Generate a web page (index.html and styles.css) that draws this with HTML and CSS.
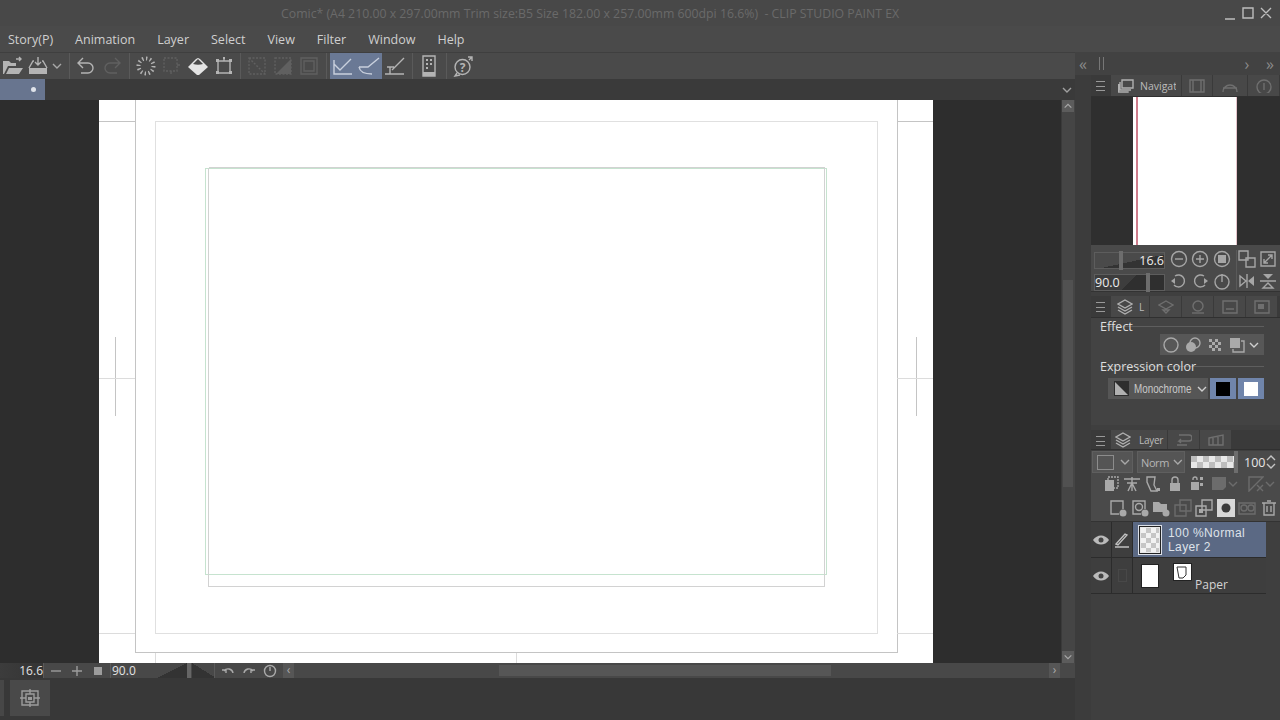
FILE: index.html
```html
<!DOCTYPE html>
<html lang="en">
<head>
    <meta charset="UTF-8">
    <title>Comic - CLIP STUDIO PAINT EX</title>
    <link rel="stylesheet" href="styles.css">
</head>
<body>
    <svg class="defs" width="0" height="0">
        <symbol id="chev" viewBox="0 0 12 12"><path d="M2 4l4 4 4-4" fill="none" stroke="currentColor" stroke-width="1.4"/></symbol>
    </svg>

    <div class="titlebar">
        <span class="title">Comic* (A4 210.00 x 297.00mm Trim size:B5 Size 182.00 x 257.00mm 600dpi 16.6%)&nbsp; - CLIP STUDIO PAINT EX</span>
        <div class="win-buttons">
            <svg class="ic" width="58" height="16" viewBox="0 0 58 16"><path d="M6 14h10M24 3h10v10H24zM42 3l10 10M52 3L42 13"/></svg>
        </div>
    </div>

    <div class="menubar">
        <span>Story(P)</span><span>Animation</span><span>Layer</span><span>Select</span><span>View</span><span>Filter</span><span>Window</span><span>Help</span>
    </div>

    <div class="workspace">
        <div class="main">
            <div class="toolbar">
                <div class="tb-group first">
                    <div class="tb-btn"><svg class="ic" width="22" height="20" viewBox="0 0 22 20"><path class="solid" d="M1 18V5h6l2 2h5v3H6L2 18zM4 18l3-6h14l-4 6z"/><path d="M14 3h5M17 1l2 2-2 2"/></svg></div>
                    <div class="tb-btn"><svg class="ic" width="22" height="20" viewBox="0 0 22 20"><path d="M11 1v8M8 6l3 3 3-3M7 5H6l-4 7M15 5h1l4 7"/><path class="solid" d="M2 12h18v6H2z"/></svg></div>
                    <div class="tb-chev"><svg width="12" height="12"><use href="#chev"/></svg></div>
                </div>
                <div class="tb-group">
                    <div class="tb-btn"><svg class="ic" width="20" height="20" viewBox="0 0 20 20"><path d="M7 2L2 7l5 5M2 7h10a5 5 0 0 1 0 10H5"/></svg></div>
                    <div class="tb-btn dim"><svg class="ic" width="20" height="20" viewBox="0 0 20 20"><path d="M13 2l5 5-5 5M18 7H8a5 5 0 0 0 0 10h7"/></svg></div>
                </div>
                <div class="tb-group tight">
                    <div class="tb-btn"><svg class="ic" width="20" height="20" viewBox="0 0 20 20"><circle class="rays" cx="10" cy="10" r="7.5"/></svg></div>
                    <div class="tb-btn dim"><svg class="ic" width="20" height="20" viewBox="0 0 20 20"><path stroke-dasharray="2 1.5" d="M2 2h13v13H2z"/><path d="M9 15v3M15 9h3"/></svg></div>
                    <div class="tb-btn bright"><svg class="ic" width="22" height="20" viewBox="0 0 22 20"><path class="solid" d="M1 11l8-8 2-1 2 1 8 8-9 8h-2z"/><path class="cut" d="M6 8l5-5 5 5c-3 1-7 1-10 0z"/></svg></div>
                    <div class="tb-btn"><svg class="ic" width="20" height="20" viewBox="0 0 20 20"><path d="M4 5h12v12H4zM10 1v4"/><path class="solid" d="M2 3h3v3H2zM15 3h3v3h-3zM2 15h3v3H2zM15 15h3v3h-3zM9 1h2v2H9z"/></svg></div>
                </div>
                <div class="tb-group">
                    <div class="tb-btn dim"><svg class="ic" width="20" height="20" viewBox="0 0 20 20"><path stroke-dasharray="2 1.5" d="M2 2h16v16H2zM2 2l16 16"/></svg></div>
                    <div class="tb-btn dim"><svg class="ic" width="20" height="20" viewBox="0 0 20 20"><path stroke-dasharray="2 1.5" d="M2 2h16v16H2z"/><path class="solid" d="M18 3v15H3z"/></svg></div>
                    <div class="tb-btn dim"><svg class="ic" width="20" height="20" viewBox="0 0 20 20"><path d="M2 2h16v16H2zM5 5h10v10H5z"/></svg></div>
                </div>
                <div class="tb-group">
                    <div class="tb-btn active"><svg class="ic" width="22" height="20" viewBox="0 0 22 20"><path d="M2 4v14h18M2 8l6 6 11-11"/></svg></div>
                    <div class="tb-btn active"><svg class="ic" width="24" height="20" viewBox="0 0 24 20"><path d="M2 11c1 6 7 7 13 7M2 11h9L22 2"/></svg></div>
                    <div class="tb-btn"><svg class="ic" width="22" height="20" viewBox="0 0 22 20"><path d="M1 18h19M3 11h7M6 11v7M8 14L20 2"/></svg></div>
                </div>
                <div class="tb-group">
                    <div class="tb-btn"><svg class="ic" width="16" height="22" viewBox="0 0 16 22"><path d="M2 1h12v20H2z"/><path class="solid" d="M2 17h12v4H2zM5 4h2v2H5zM9 4h2v2H9zM5 8h2v2H5zM9 8h2v2H9zM5 12h2v2H5z"/></svg></div>
                </div>
                <div class="tb-group end">
                    <div class="tb-btn"><svg class="ic" width="20" height="22" viewBox="0 0 20 22"><circle cx="9.500" cy="12" r="7.500"/><path d="M4 18l-2 3 5-1M15 2h4v4M19 2l-3 3"/><text class="q" x="9.500" y="16.500" text-anchor="middle">?</text></svg></div>
                </div>
            </div>

            <div class="tabbar">
                <div class="doc-tab"><i></i></div>
                <svg width="12" height="12"><use href="#chev"/></svg>
            </div>

            <div class="canvas-row">
                <div class="canvas">
                    <svg class="page" width="834" height="563" viewBox="99 100 834 563" shape-rendering="crispEdges">
                        <path class="bleed" d="M135.5 100v552.5h762V100M99 121.5h36M897 121.5h36M115.5 337v79M916.5 337v79"/>
                        <path class="faint" d="M99 378.5h36M897 378.5h36M99 633.5h36M897 633.5h36M155.5 653v10M516.5 653v10"/>
                        <path class="trim" d="M155.5 121.5h722v512h-722z"/>
                        <path class="safe" d="M205.5 168.5h621v406h-621z"/>
                        <path class="inner" d="M208.5 575v11h616v-11M208.5 167.5h616M208.5 168v407M824.5 168v407"/>
                    </svg>
                </div>
                <div class="vscroll">
                    <div class="sb-btn"><svg width="10" height="10"><use href="#chev" transform="rotate(180 5 5)"/></svg></div>
                    <div class="v-track"><div class="v-thumb"></div></div>
                    <div class="sb-btn"><svg width="10" height="10"><use href="#chev"/></svg></div>
                </div>
            </div>

            <div class="statusbar">
                <div class="st-field zoom-field">16.6</div>
                <div class="st-icons">
                    <svg class="ic" width="14" height="14" viewBox="0 0 14 14"><path d="M2 7h10"/></svg>
                    <svg class="ic" width="14" height="14" viewBox="0 0 14 14"><path d="M2 7h10M7 2v10"/></svg>
                    <svg class="ic" width="14" height="14" viewBox="0 0 14 14"><path class="solid" d="M3 3h8v8H3z"/></svg>
                </div>
                <div class="st-field angle-field">90.0<i></i></div>
                <div class="st-rot">
                    <svg class="ic" width="14" height="14" viewBox="0 0 14 14"><path d="M3 7a5 5 0 0 1 9 2M1 6h4v3"/></svg>
                    <svg class="ic" width="14" height="14" viewBox="0 0 14 14"><path d="M11 7a5 5 0 0 0-9 2M13 6H9v3"/></svg>
                    <svg class="ic" width="14" height="14" viewBox="0 0 14 14"><circle cx="7" cy="7" r="5.5"/><path d="M7 3v4"/></svg>
                </div>
                <div class="st-back">‹</div>
                <div class="h-track"><div class="h-thumb"></div></div>
                <div class="st-next">›</div>
            </div>

            <div class="bottombar">
                <div class="grip"></div>
                <div class="bottom-btn">
                    <svg class="ic" width="20" height="20" viewBox="0 0 20 20"><path d="M2 3h16v14H2zM6 6h8v8H6zM10 1v5M10 14v5M0 10h6M14 10h6"/><path class="solid" d="M8 9h4v3H8z"/></svg>
                </div>
            </div>
        </div>

        <div class="side">
            <div class="side-strip">
                <span class="arrows">«</span><span class="bars"></span><span class="spacer"></span><span class="arrows one">›</span><span class="arrows">»</span>
            </div>
            <div class="panels">

                <section class="nav-panel">
                    <div class="tabrow">
                        <div class="burger"></div>
                        <div class="tab tab-nav on">
                            <svg class="ic" width="16" height="14" viewBox="0 0 16 14"><path d="M4 1h11v8H4zM2 3v8h11M0.700 5v8h10"/></svg>
                            <span class="clip">Navigat</span>
                        </div>
                        <div class="tab w31 faded"><svg class="ic" width="16" height="14" viewBox="0 0 16 14"><path d="M1 1h14v12H1zM4 1v12M12 1v12"/></svg></div>
                        <div class="tab w35 faded"><svg class="ic" width="16" height="14" viewBox="0 0 16 14"><path d="M1 13a7 7 0 0 1 14 0M1 9h14"/></svg></div>
                        <div class="tab w32 faded"><svg class="ic" width="16" height="14" viewBox="0 0 16 14"><circle cx="8" cy="8" r="7"/><path d="M8 4v7"/></svg></div>
                    </div>
                    <div class="nav-view"><div class="nav-page"></div></div>
                    <div class="nav-controls">
                        <div class="nav-sliders">
                            <div class="slider zoom-slider"><b>16.6</b><i></i></div>
                            <div class="slider angle-slider"><b>90.0</b><i></i></div>
                        </div>
                        <div class="nav-grid">
                            <svg class="ic" width="18" height="18" viewBox="0 0 18 18"><circle cx="9" cy="9" r="7.500"/><path d="M5 9h8"/></svg>
                            <svg class="ic" width="18" height="18" viewBox="0 0 18 18"><circle cx="9" cy="9" r="7.500"/><path d="M5 9h8M9 5v8"/></svg>
                            <svg class="ic" width="18" height="18" viewBox="0 0 18 18"><circle cx="9" cy="9" r="7.500"/><path class="solid" d="M5 5h8v8H5z"/></svg>
                            <svg class="ic" width="18" height="18" viewBox="0 0 18 18"><path d="M5 4a6 6 0 1 1-1 9"/><path class="solid" d="M1 9l4-3v6z"/></svg>
                            <svg class="ic" width="18" height="18" viewBox="0 0 18 18"><path d="M13 4a6 6 0 1 0 1 9"/><path class="solid" d="M17 9l-4-3v6z"/></svg>
                            <svg class="ic" width="18" height="18" viewBox="0 0 18 18"><circle cx="9" cy="10" r="7"/><path d="M9 2v8"/></svg>
                        </div>
                        <div class="nav-grid small">
                            <svg class="ic" width="18" height="18" viewBox="0 0 18 18"><path d="M1 1h9v9H1zM8 8h9v9H8z"/></svg>
                            <svg class="ic" width="18" height="18" viewBox="0 0 18 18"><path d="M2 2h14v14H2zM5 13l8-8M5 9v4h4M13 9V5H9"/></svg>
                            <svg class="ic" width="18" height="18" viewBox="0 0 18 18"><path d="M2 4l6 5-6 5zM9 2v14"/><path class="solid" d="M16 4l-6 5 6 5z"/></svg>
                            <svg class="ic" width="18" height="18" viewBox="0 0 18 18"><path d="M1 9h16M4 16l5-5 5 5z"/><path class="solid" d="M4 2l5 5 5-5z"/></svg>
                        </div>
                    </div>
                </section>

                <section class="prop-panel">
                    <div class="tabrow">
                        <div class="burger"></div>
                        <div class="tab w39 on">
                            <svg class="ic" width="16" height="16" viewBox="0 0 16 16"><path d="M8 1l7 4-7 4-7-4zM1 8l7 4 7-4M1 11l7 4 7-4"/></svg>
                            <span class="tiny">L</span>
                        </div>
                        <div class="tab w32 faded"><svg class="ic" width="16" height="14" viewBox="0 0 16 14"><path d="M8 1l7 4-7 4-7-4zM8 13l-3-3h6z"/></svg></div>
                        <div class="tab w32 faded"><svg class="ic" width="16" height="14" viewBox="0 0 16 14"><circle cx="8" cy="6" r="5"/><path d="M2 13h12"/></svg></div>
                        <div class="tab w32 faded"><svg class="ic" width="16" height="14" viewBox="0 0 16 14"><path d="M1 1h14v12H1zM4 9h8"/></svg></div>
                        <div class="tab w32 faded"><svg class="ic" width="16" height="14" viewBox="0 0 16 14"><path d="M1 1h14v12H1z"/><path class="solid" d="M4 4h6v5H4z"/></svg></div>
                    </div>
                    <div class="prop-body">
                        <div class="prop-label"><span>Effect</span></div>
                        <div class="effect-bar">
                            <svg class="ic" width="16" height="16" viewBox="0 0 16 16"><circle cx="8" cy="8" r="7"/></svg>
                            <svg class="ic" width="16" height="16" viewBox="0 0 16 16"><circle cx="10" cy="6" r="5"/><circle class="solid" cx="6" cy="10" r="5"/></svg>
                            <svg class="ic" width="16" height="16" viewBox="0 0 16 16"><path class="check" d="M2 2h3v3H2zM8 2h3v3H8zM5 5h3v3H5zM11 5h3v3h-3zM2 8h3v3H2zM8 8h3v3H8zM5 11h3v3H5zM11 11h3v3h-3z"/></svg>
                            <svg class="ic" width="16" height="16" viewBox="0 0 16 16"><path class="solid" d="M1 1h10v10H1z"/><path d="M12 4h3v11H4v-3"/></svg>
                            <svg class="pale back" width="12" height="12"><use href="#chev"/></svg>
                        </div>
                        <div class="prop-label second"><span>Expression color</span></div>
                        <div class="express-row">
                            <div class="mono-select">
                                <svg width="15" height="15" viewBox="0 0 15 15"><path d="M0 0h15v15H0z" fill="#2e2e2e"/><path d="M1 1l13 13H1z" fill="#b0b0b0"/></svg>
                                <span>Monochrome</span>
                                <svg class="pale" width="12" height="12"><use href="#chev"/></svg>
                            </div>
                            <div class="swatch"><i class="black"></i></div>
                            <div class="swatch"><i class="white"></i></div>
                        </div>
                    </div>
                </section>

                <section class="layer-panel">
                    <div class="tabrow low">
                        <div class="burger"></div>
                        <div class="tab w57 on">
                            <svg class="ic" width="16" height="16" viewBox="0 0 16 16"><path d="M8 1l7 4-7 4-7-4zM1 8l7 4 7-4M1 11l7 4 7-4"/></svg>
                            <span class="tiny">Layer</span>
                        </div>
                        <div class="tab w32 faded"><svg class="ic" width="16" height="12" viewBox="0 0 16 12"><path d="M3 1h10a3 3 0 0 1 0 6H3l2-2M3 7l2 2M1 11h10"/></svg></div>
                        <div class="tab w32 faded"><svg class="ic" width="16" height="12" viewBox="0 0 16 12"><path d="M1 4l14-3v10H1zM5 4v7M10 3v8"/></svg></div>
                    </div>
                    <div class="layer-tools">
                        <div class="mode-row">
                            <div class="sel sel-box"><i></i><svg width="12" height="12"><use href="#chev"/></svg></div>
                            <div class="sel sel-mode"><span>Norm</span><svg width="12" height="12"><use href="#chev"/></svg></div>
                            <div class="opacity"><i></i></div>
                            <span class="opacity-val">100</span>
                            <svg class="ic stepper" width="10" height="16" viewBox="0 0 10 16"><path d="M1 6l4-4 4 4M1 10l4 4 4-4"/></svg>
                        </div>
                        <div class="icon-row row-a">
                            <span><svg class="ic" width="16" height="16" viewBox="0 0 16 16"><path d="M5 1h10v11H5z" stroke-dasharray="2 1"/><path class="solid" d="M2 4h9v11H2z"/></svg></span>
                            <span><svg class="ic" width="18" height="16" viewBox="0 0 18 16"><path d="M1 3h16M4 7h10M9 1v14M5 15l4-8 4 8"/></svg></span>
                            <span><svg class="ic" width="16" height="16" viewBox="0 0 16 16"><path d="M2 1h8l-1 8 3 6H6L2 6z"/><path class="solid" d="M12 12h3v3h-3z"/></svg></span>
                            <span><svg class="ic" width="14" height="16" viewBox="0 0 14 16"><path d="M4 7V4a3 3 0 0 1 6 0v3"/><path class="solid" d="M2 7h10v8H2z"/></svg></span>
                            <span><svg class="ic" width="16" height="16" viewBox="0 0 16 16"><path d="M5 4V3a2 2 0 0 1 4 0v1"/><path class="solid" d="M3 6h8v8H3zM12 1h3v3h-3zM12 7h3v3h-3z"/></svg></span>
                            <span class="wide dim"><svg class="ic" width="16" height="16" viewBox="0 0 16 16"><path class="solid" d="M1 1h14v10l-3 3H1z"/></svg><svg width="12" height="12"><use href="#chev"/></svg></span>
                            <span class="wide dim"><svg class="ic" width="16" height="16" viewBox="0 0 16 16"><path d="M1 1h14L1 15zM9 9l6 6M15 9l-6 6"/></svg><svg width="12" height="12"><use href="#chev"/></svg></span>
                        </div>
                        <div class="icon-row row-b">
                            <span><svg class="ic" width="18" height="18" viewBox="0 0 18 18"><path d="M10 15H2V2h12v8"/><circle class="solid" cx="14" cy="14" r="3.500"/></svg></span>
                            <span><svg class="ic" width="18" height="18" viewBox="0 0 18 18"><path d="M10 15H2V2h12v8"/><circle cx="8" cy="8" r="3.500"/><circle class="solid" cx="14" cy="14" r="3.500"/></svg></span>
                            <span><svg class="ic" width="18" height="18" viewBox="0 0 18 18"><path class="solid" d="M1 3h6l2 2h6v8H1z"/><circle class="solid" cx="14" cy="14" r="3.500"/></svg></span>
                            <span class="dim"><svg class="ic" width="18" height="18" viewBox="0 0 18 18"><path d="M6 1h11v11H6zM1 6h11v11H1z"/></svg></span>
                            <span><svg class="ic" width="18" height="18" viewBox="0 0 18 18"><path d="M7 1h10v10H7zM1 7h10v10H1z"/><path class="solid" d="M4 10h4v4H4z"/></svg></span>
                            <span class="bright"><svg width="18" height="18" viewBox="0 0 18 18"><path d="M0 0h18v18H0z" fill="#d8d8d8"/><circle cx="9" cy="9" r="4.500" fill="#3c3c3c"/></svg></span>
                            <span class="dim"><svg class="ic" width="18" height="18" viewBox="0 0 18 18"><path d="M1 4h16v11H1z"/><circle cx="6" cy="9" r="3"/><circle cx="13" cy="9" r="3"/></svg></span>
                            <span><svg class="ic" width="14" height="16" viewBox="0 0 14 16"><path d="M2 3h10v12H2zM0 3h14M5 1h4M5 6v6M9 6v6"/></svg></span>
                        </div>
                    </div>

                    <div class="layer-row current">
                        <div class="eye-col"><svg width="16" height="10" viewBox="0 0 16 10"><path d="M0 5c4-6 12-6 16 0-4 6-12 6-16 0z" fill="#bbb"/><circle cx="8" cy="5" r="2.500" fill="#444"/></svg></div>
                        <div class="pen-col"><svg class="ic" width="16" height="16" viewBox="0 0 16 16"><path d="M1 15h14M2 12l2 1 9-10-2-1z"/></svg></div>
                        <div class="layer-body">
                            <div class="thumb checker"></div>
                            <div class="layer-text"><div>100 %Normal</div><div>Layer 2</div></div>
                        </div>
                    </div>
                    <div class="layer-row">
                        <div class="eye-col"><svg width="16" height="10" viewBox="0 0 16 10"><path d="M0 5c4-6 12-6 16 0-4 6-12 6-16 0z" fill="#bbb"/><circle cx="8" cy="5" r="2.500" fill="#444"/></svg></div>
                        <div class="pen-col"><i class="no-pen"></i></div>
                        <div class="layer-body paper">
                            <div class="thumb plain"></div>
                            <div class="mask"><svg width="13" height="13" viewBox="0 0 13 13"><path d="M1 1h9v8l-3 3H3z" fill="none" stroke="#333"/></svg></div>
                            <span class="paper-name">Paper</span>
                        </div>
                    </div>
                </section>
            </div>
        </div>
    </div>
</body>
</html>
```

FILE: styles.css
```css
* {
    box-sizing: border-box;
}
html, body {
    height: 100%;
}
body {
    margin: 0;
    width: 1280px;
    height: 720px;
    overflow: hidden;
    display: flex;
    flex-direction: column;
    background-color: #3b3b3b;
    color: #c4c4c4;
    font-family: "Open Sans", "Liberation Sans", sans-serif;
    font-size: 12px;
}
.defs {
    position: absolute;
}
.ic {
    fill: none;
    stroke: currentColor;
    stroke-width: 1.4;
    flex: none;
}
.ic .solid {
    fill: currentColor;
    stroke: none;
}
.ic .check {
    fill: currentColor;
    stroke: none;
}
.ic .cut {
    fill: #4a4a4a;
    stroke: none;
}
.ic .rays {
    stroke-width: 4;
    stroke-dasharray: 1.4 2.5;
}
.ic .q {
    fill: currentColor;
    stroke: none;
    font-size: 12px;
    font-weight: 700;
}

/* title + menu */
.titlebar {
    height: 26px;
    flex: none;
    display: flex;
    align-items: center;
    justify-content: space-between;
    padding-left: 281px;
    padding-right: 3px;
    background-color: #484848;
}
.title {
    color: #6a6a6a;
    font-size: 12.3px;
    white-space: nowrap;
}
.win-buttons {
    display: flex;
    color: #bdbdbd;
    margin-top: -1px;
}
.menubar {
    height: 26px;
    flex: none;
    display: flex;
    align-items: center;
    gap: 22px;
    padding-left: 8px;
    background-color: #4a4a4a;
    color: #cfcfcf;
    font-size: 12.5px;
}

.workspace {
    flex: 1;
    display: flex;
    min-height: 0;
}
.main {
    width: 1075px;
    display: flex;
    flex-direction: column;
}

/* toolbar */
.toolbar {
    height: 27px;
    flex: none;
    display: flex;
    background-color: #4a4a4a;
    border-top: 1px solid #3f3f3f;
}
.tb-group {
    display: flex;
    align-items: center;
    padding: 0 4px 0 3px;
    border-right: 1px solid #5a5a5a;
}
.tb-group.first {
    padding: 0 5px 0 0;
}
.tb-group.first .tb-btn {
    width: 25px;
}
.tb-group.tight {
    padding-right: 3px;
}
.tb-group.end {
    border-right: none;
}
.tb-btn {
    width: 26px;
    height: 26px;
    display: flex;
    align-items: center;
    justify-content: center;
    color: #b4b4b4;
}
.tb-btn.dim {
    color: #606060;
}
.tb-btn.bright {
    color: #e4e4e4;
}
.tb-btn.active {
    background-color: #6a7995;
    color: #c9d0dd;
}
.tb-chev {
    width: 14px;
    display: flex;
    justify-content: center;
    color: #a8a8a8;
}

.tabbar {
    height: 21px;
    flex: none;
    display: flex;
    justify-content: space-between;
    align-items: center;
    padding-right: 2px;
    background-color: #3a3a3a;
    color: #a0a0a0;
}
.doc-tab {
    width: 45px;
    height: 21px;
    display: flex;
    align-items: center;
    padding-left: 31px;
    background-color: #68758f;
}
.doc-tab i {
    width: 5px;
    height: 5px;
    border-radius: 50%;
    background-color: #dfe3ea;
}

/* canvas */
.canvas-row {
    flex: 1;
    display: flex;
    min-height: 0;
}
.canvas {
    flex: 1;
    padding-left: 99px;
    background-color: #2d2d2d;
    overflow: hidden;
}
.page {
    display: block;
    background-color: #fff;
    fill: none;
}
.page .bleed {
    stroke: #c4c4c4;
}
.page .faint {
    stroke: #dcdcdc;
}
.page .trim {
    stroke: #e0e0e0;
}
.page .inner {
    stroke: #d2d2d2;
}
.page .safe {
    stroke: #c6e3cf;
}
.vscroll {
    width: 14px;
    margin-right: 0;
    display: flex;
    flex-direction: column;
    padding-right: 1px;
    background-color: #454545;
    border-left: 1px solid #3a3a3a;
}
.sb-btn {
    height: 12px;
    flex: none;
    display: flex;
    align-items: center;
    justify-content: center;
    background-color: #5c5c5c;
    color: #a8a8a8;
}
.v-track {
    flex: 1;
    padding-top: 168px;
}
.v-thumb {
    height: 207px;
    margin: 0 1px;
    background-color: #515151;
}

/* status strip under the canvas */
.statusbar {
    height: 15px;
    flex: none;
    display: flex;
    align-items: center;
    background-color: #484848;
    color: #e2e2e2;
    font-size: 12px;
}
.st-field {
    height: 15px;
    line-height: 15px;
}
.zoom-field {
    width: 44px;
    text-align: right;
    background: linear-gradient(to right, #3c3c3c, #343434);
    border-right: 1px solid #5a5a5a;
}
.st-icons {
    width: 66px;
    display: flex;
    justify-content: space-between;
    padding: 0 5px 0 5px;
    color: #9c9c9c;
}
.angle-field {
    width: 105px;
    padding-left: 1px;
    border: 1px solid #5a5a5a;
    border-width: 0 1px 0 1px;
    background:
        linear-gradient(to top left, #333 50%, transparent 50%) 46px 0 / 30px 15px no-repeat,
        linear-gradient(to top right, #333 50%, transparent 50%) 81px 0 / 24px 15px no-repeat,
        #484848;
    position: relative;
}
.angle-field i {
    position: absolute;
    left: 76px;
    top: 0;
    width: 4px;
    height: 15px;
    background-color: #666;
}
.st-rot {
    width: 68px;
    display: flex;
    justify-content: space-between;
    padding: 0 6px 0 6px;
    color: #aaa;
}
.st-back, .st-next {
    width: 11px;
    height: 15px;
    line-height: 13px;
    text-align: center;
    background-color: #565656;
    color: #aaa;
}
.h-track {
    flex: 1;
    padding-left: 205px;
}
.h-thumb {
    width: 332px;
    height: 11px;
    background-color: #565656;
}
.st-next {
    margin-right: 15px;
}

.bottombar {
    height: 42px;
    flex: none;
    display: flex;
    padding-top: 2px;
    background-color: #383838;
}
.grip {
    width: 4px;
    height: 36px;
    background-color: #474747;
}
.bottom-btn {
    width: 40px;
    height: 36px;
    margin-left: 6px;
    display: flex;
    align-items: center;
    justify-content: center;
    background-color: #494949;
    color: #9c9c9c;
}

/* right column */
.side {
    width: 205px;
    display: flex;
    flex-direction: column;
    background-color: #3b3b3b;
}
.side-strip {
    height: 23px;
    flex: none;
    display: flex;
    align-items: center;
    padding: 0 4px 0 2px;
    background-color: #424242;
    color: #8a8a8a;
    font-size: 16px;
}
.arrows {
    width: 12px;
    line-height: 20px;
    text-align: center;
}
.arrows.one {
    margin-right: 11px;
}
.bars {
    width: 5px;
    height: 13px;
    margin-left: 10px;
    border: 1px solid #777;
    border-width: 0 1px;
}
.spacer {
    flex: 1;
}
.panels {
    flex: 1;
    padding-left: 16px;
    display: flex;
    flex-direction: column;
    background: linear-gradient(to right, #3c3c3c 16px, #3f3f3f 16px);
}

.tabrow {
    height: 22px;
    flex: none;
    display: flex;
    background-color: #3a3a3a;
    border-bottom: 1px solid #303030;
}
.tabrow.low {
    height: 20px;
    margin-top: 5px;
}
.burger {
    width: 20px;
    position: relative;
}
.burger::before {
    content: "";
    position: absolute;
    left: 5px;
    top: 6px;
    width: 9px;
    height: 8px;
    border-top: 1px solid #999;
    border-bottom: 1px solid #999;
    background: linear-gradient(#999, #999) center / 100% 1px no-repeat;
}
.tab {
    display: flex;
    align-items: center;
    justify-content: center;
    gap: 6px;
    background-color: #484848;
    border-right: 1px solid #3a3a3a;
    color: #b0b0b0;
}
.tab.faded {
    color: #6f6f6f;
}
.tab-nav {
    width: 71px;
    justify-content: flex-start;
    padding-left: 7px;
    overflow: hidden;
}
.clip {
    width: 36px;
    overflow: hidden;
    font-size: 10.5px;
    color: #bcbcbc;
    white-space: nowrap;
}
.tiny {
    font-size: 10px;
    letter-spacing: -0.3px;
    color: #bcbcbc;
}
.w31 { width: 31px; }
.w32 { width: 32px; }
.w35 { width: 35px; }
.w39 { width: 39px; justify-content: flex-end; padding-right: 5px; }
.w57 { width: 57px; gap: 8px; }

/* navigator */
.nav-view {
    height: 148px;
    flex: none;
    padding-left: 42px;
    background-color: #2f2f2f;
}
.nav-page {
    width: 104px;
    height: 148px;
    background-color: #fff;
    border-left: 3px solid #fff;
    border-right: 1px solid #e6c4cb;
    position: relative;
}
.nav-page::before {
    content: "";
    position: absolute;
    left: 0;
    top: 0;
    width: 2px;
    height: 100%;
    background-color: #cf7d8c;
}
.nav-controls {
    height: 47px;
    flex: none;
    display: flex;
    align-items: flex-start;
    padding: 7px 0 0 3px;
    background-color: #4a4a4a;
    border-bottom: 1px solid #333;
}
.nav-sliders {
    width: 71px;
    display: flex;
    flex-direction: column;
    gap: 5px;
}
.slider {
    height: 17px;
    position: relative;
    border: 1px solid #5d5d5d;
    color: #ececec;
    font-size: 12.5px;
    line-height: 15px;
}
.slider b {
    position: absolute;
    font-weight: 400;
}
.slider i {
    position: absolute;
    top: -2px;
    width: 4px;
    height: 19px;
    background-color: #6d6d6d;
}
.zoom-slider {
    background: linear-gradient(168deg, #4a4a4a 55%, #333 55%);
}
.zoom-slider b {
    right: 0;
}
.zoom-slider i {
    left: 24px;
}
.angle-slider {
    background: linear-gradient(135deg, #3d3d3d 50%, #2f2f2f 50%);
}
.angle-slider i {
    left: 51px;
}
.nav-grid {
    width: 64.500px;
    margin: -2px 0 0 3px;
    display: grid;
    grid-template-columns: repeat(3, 1fr);
    row-gap: 4px;
    justify-items: center;
    color: #a6a6a6;
}
.nav-grid.small {
    width: 42px;
    margin-left: 3.500px;
    grid-template-columns: repeat(2, 1fr);
    border-left: 1px solid #5a5a5a;
}

/* effect / expression color */
.prop-panel {
    margin-top: 4px;
}
.prop-body {
    height: 107px;
    padding: 0 16px 0 9px;
    background-color: #434343;
}
.prop-label {
    height: 17px;
    background: linear-gradient(#5e5e5e, #5e5e5e) 0 8px / 100% 1px no-repeat;
    color: #dedede;
    font-size: 12.5px;
    line-height: 17px;
}
.prop-label.second {
    margin-top: 3px;
}
.effect-bar {
    width: 104px;
    height: 21px;
    margin: -1px 0 0 60px;
    display: flex;
    align-items: center;
    gap: 6px;
    padding-left: 3px;
    background-color: #575757;
    color: #a9a9a9;
}
.pale {
    color: #cfcfcf;
}
.pale.back {
    margin-left: -3px;
}
.express-row {
    height: 21px;
    margin: 3px 0 0 8px;
    display: flex;
    gap: 2px;
}
.mono-select {
    width: 100px;
    display: flex;
    align-items: center;
    gap: 5px;
    padding-left: 6px;
    background-color: #565656;
    color: #c8c8c8;
}
.mono-select span {
    width: 57px;
    font-family: "Liberation Sans", sans-serif;
    font-size: 12px;
    white-space: nowrap;
    transform: scaleX(0.82);
    transform-origin: left center;
}
.swatch {
    width: 26px;
    display: flex;
    align-items: center;
    justify-content: center;
    background-color: #7085ab;
}
.swatch i {
    width: 14px;
    height: 14px;
}
.swatch .black {
    background-color: #000;
}
.swatch .white {
    background-color: #fff;
}

/* layer palette */
.layer-tools {
    height: 71px;
    flex: none;
    background-color: #4a4a4a;
    border-bottom: 1px solid #333;
}
.mode-row {
    height: 22px;
    margin-top: 1px;
    padding-left: 1px;
    display: flex;
    align-items: center;
    color: #a8a8a8;
}
.sel {
    height: 22px;
    display: flex;
    align-items: center;
    border: 1px solid #5f5f5f;
    background-color: #555;
}
.sel-box {
    width: 41px;
    padding-left: 4px;
    gap: 5px;
}
.sel-box i {
    width: 17px;
    height: 15px;
    border: 1px solid #8c8c8c;
}
.sel-mode {
    width: 48px;
    margin-left: 4px;
    padding-left: 3px;
    gap: 3px;
    font-size: 11px;
}
.sel-mode span {
    width: 29px;
    white-space: nowrap;
    letter-spacing: -0.4px;
    color: #b6b6b6;
}
.opacity {
    width: 46px;
    height: 12px;
    margin-left: 6px;
    position: relative;
    background: repeating-conic-gradient(#e8e8e8 0 25%, #bdbdbd 0 50%) 0 0 / 12px 12px;
}
.opacity i {
    position: absolute;
    right: -1px;
    top: -5px;
    width: 4px;
    height: 22px;
    background-color: #6d6d6d;
}
.opacity-val {
    margin-left: 7px;
    color: #e6e6e6;
    font-size: 12.5px;
}
.stepper {
    margin-left: 1px;
    color: #c4c4c4;
}
.icon-row {
    display: flex;
    align-items: center;
    color: #a9a9a9;
}
.icon-row span {
    width: 21.500px;
    display: flex;
    justify-content: center;
    align-items: center;
}
.icon-row .wide {
    width: 37px;
}
.icon-row .dim {
    color: #6c6c6c;
}
.row-a {
    height: 24px;
    margin-top: -1px;
    padding-left: 9px;
}
.row-b {
    height: 24px;
    padding-left: 16.500px;
}

.layer-row {
    height: 36px;
    width: 175px;
    display: flex;
    background-color: #3e3e3e;
    border-bottom: 1px solid #2c2c2c;
}
.eye-col {
    width: 21px;
    display: flex;
    align-items: center;
    justify-content: center;
    border-right: 1px solid #2b2b2b;
}
.pen-col {
    width: 21px;
    display: flex;
    align-items: center;
    justify-content: center;
    border-right: 1px solid #2b2b2b;
    color: #c0c0c0;
}
.no-pen {
    width: 9px;
    height: 13px;
    border: 1px solid #484848;
}
.layer-body {
    flex: 1;
    display: flex;
    align-items: center;
    padding-left: 6px;
    gap: 7px;
}
.current .layer-body {
    background-color: #5b6984;
}
.thumb {
    width: 22px;
    height: 28px;
    flex: none;
    border: 2px solid #e8e8e8;
    outline: 1px solid #222;
    outline-offset: -1px;
}
.checker {
    background: repeating-conic-gradient(#c6c6c6 0 25%, #f2f2f2 0 50%) 0 0 / 10px 10px;
    box-shadow: 0 0 0 1px #dce0e8;
}
.plain {
    width: 18px;
    height: 24px;
    margin-left: 2px;
    background-color: #fff;
    border: 1px solid #222;
    outline: none;
}
.layer-text {
    color: #dfe3ea;
    font-family: "Liberation Sans", sans-serif;
    font-size: 12px;
    letter-spacing: 0.4px;
    line-height: 14px;
}
.paper {
    position: relative;
    align-items: flex-start;
    padding-top: 6px;
    gap: 14px;
}
.mask {
    width: 19px;
    height: 18px;
    margin-top: -1px;
    display: flex;
    align-items: center;
    justify-content: center;
    background-color: #fff;
    border: 1px solid #222;
}
.paper-name {
    margin: 12px 0 0 -11px;
    color: #d4d4d4;
    font-size: 12px;
}
```
